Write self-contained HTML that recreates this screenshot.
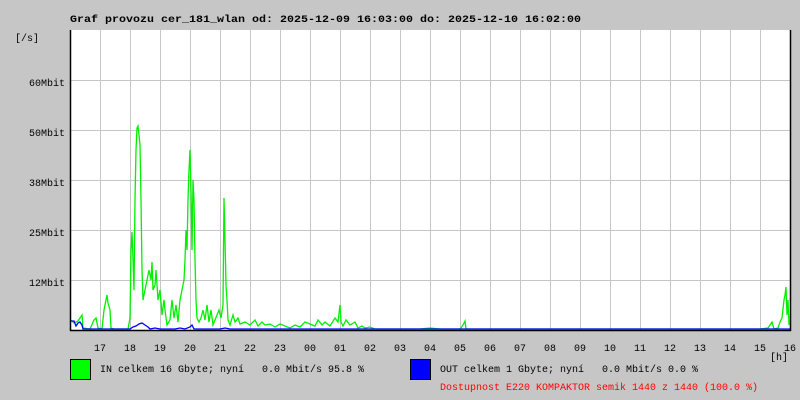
<!DOCTYPE html>
<html><head><style>
html,body{margin:0;padding:0;background:#c6c6c6;}
svg{display:block}
text{font-family:"Liberation Mono",monospace;font-size:10px;white-space:pre;}
</style></head><body>
<svg width="800" height="400" viewBox="0 0 800 400" xmlns="http://www.w3.org/2000/svg" xml:space="preserve">
<rect width="800" height="400" fill="#c6c6c6"/>
<rect x="70" y="30" width="720" height="300" fill="#fff"/>
<g stroke="#c6c6c6" stroke-width="1">
<path d="M100.5 30V330M130.5 30V330M160.5 30V330M190.5 30V330M220.5 30V330M250.5 30V330M280.5 30V330M310.5 30V330M340.5 30V330M370.5 30V330M400.5 30V330M430.5 30V330M460.5 30V330M490.5 30V330M520.5 30V330M550.5 30V330M580.5 30V330M610.5 30V330M640.5 30V330M670.5 30V330M700.5 30V330M730.5 30V330M760.5 30V330"/>
<path d="M70 80.5H790M70 130.5H790M70 180.5H790M70 230.5H790M70 280.5H790"/>
</g>
<polyline fill="none" stroke="#00f000" stroke-width="1.3" points="70,320 72,321 74,323 76,322 78,321 80,318 82,315 83,328 90,329 94,320 96,318 98,328 102,329 104,310 106,300 107,295 108,303 110,310 111,328 114,329 128,329 130,318 131,250 132,232 133,260 134,290 135,200 136,150 137,128 138,126 139,135 140,145 141,200 142,270 143,300 145,290 147,280 149,270 151,280 152,262 153,290 155,285 156,270 158,300 160,290 162,315 164,300 165,310 167,325 170,320 172,300 174,318 176,305 178,322 180,300 182,290 184,280 185,260 186,230 187,250 188,200 189,170 190,150 191,190 192,250 193,180 194,200 195,260 196,300 197,318 199,322 201,318 203,310 205,320 207,305 209,322 211,310 213,325 215,320 217,315 219,310 221,318 223,305 224,198 225,240 226,285 227,300 228,320 230,325 233,315 235,322 238,318 240,324 245,322 250,325 255,320 258,326 262,322 265,325 270,324 275,327 280,324 285,326 290,328 295,325 300,327 305,322 310,324 315,326 318,320 322,325 325,322 330,326 335,318 338,322 340,305 341,322 343,326 346,320 350,325 355,322 358,328 362,326 365,328 370,327 375,329 420,329 430,328 440,329 460,329 463,325 465,321 466,329 500,329 760,329 768,328 772,322 774,329 778,328 780,322 782,318 784,300 785,295 786,287 787,315 788,300 789,325"/>
<polyline fill="none" stroke="#0000ff" stroke-width="1.3" points="70,321 74,321 76,326 78,323 80,322 82,325 83,329 130,329 133,327 136,326 139,324 142,323 145,325 148,327 150,329 155,328 160,329 175,329 180,328 185,329 190,327 192,325 194,329 220,329 225,328 230,329 790,329"/>
<path d="M70.5 30V331M70 330.5H791M790.5 30V331" stroke="#000" stroke-width="1.5" fill="none"/>
<text x="70" y="22" font-weight="bold" font-size="11.7px" textLength="511" lengthAdjust="spacingAndGlyphs">Graf provozu cer_181_wlan od: 2025-12-09 16:03:00 do: 2025-12-10 16:02:00</text>
<text x="15" y="41">[/s]</text>
<g text-anchor="end">
<text x="65" y="86">60Mbit</text>
<text x="65" y="136">50Mbit</text>
<text x="65" y="186">38Mbit</text>
<text x="65" y="236">25Mbit</text>
<text x="65" y="286">12Mbit</text>
</g>
<g text-anchor="middle">
<text x="100" y="351">17</text><text x="130" y="351">18</text><text x="160" y="351">19</text><text x="190" y="351">20</text><text x="220" y="351">21</text><text x="250" y="351">22</text><text x="280" y="351">23</text><text x="310" y="351">00</text><text x="340" y="351">01</text><text x="370" y="351">02</text><text x="400" y="351">03</text><text x="430" y="351">04</text><text x="460" y="351">05</text><text x="490" y="351">06</text><text x="520" y="351">07</text><text x="550" y="351">08</text><text x="580" y="351">09</text><text x="610" y="351">10</text><text x="640" y="351">11</text><text x="670" y="351">12</text><text x="700" y="351">13</text><text x="730" y="351">14</text><text x="760" y="351">15</text><text x="790" y="351">16</text>
</g>
<text x="770" y="360">[h]</text>
<rect x="70.5" y="359.5" width="20" height="20" fill="#00ff00" stroke="#000"/>
<text x="100" y="372">IN celkem 16 Gbyte; nyní   0.0 Mbit/s 95.8 %</text>
<rect x="410.5" y="359.5" width="20" height="20" fill="#0000ff" stroke="#000"/>
<text x="440" y="372">OUT celkem 1 Gbyte; nyní   0.0 Mbit/s 0.0 %</text>
<text x="440" y="390" fill="#ff0000">Dostupnost E220 KOMPAKTOR semik 1440 z 1440 (100.0 %)</text>
</svg>
</body></html>
